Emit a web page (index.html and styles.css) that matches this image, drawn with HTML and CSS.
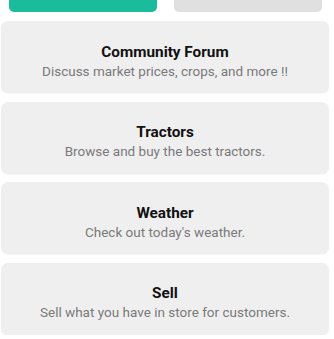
FILE: index.html
```html
<!DOCTYPE html>
<html lang="en">
<head>
<meta charset="utf-8">
<title>Home</title>
<link rel="stylesheet" href="styles.css">
</head>
<body>
<main class="page">
  <div class="actions">
    <button class="btn btn-primary">Buy</button>
    <button class="btn btn-secondary">Rent</button>
  </div>
  <section class="cards">
    <a class="card" href="#">
      <span class="card-title">Community Forum</span>
      <span class="card-sub">Discuss market prices, crops, and more !!</span>
    </a>
    <a class="card" href="#">
      <span class="card-title">Tractors</span>
      <span class="card-sub">Browse and buy the best tractors.</span>
    </a>
    <a class="card" href="#">
      <span class="card-title">Weather</span>
      <span class="card-sub">Check out today's weather.</span>
    </a>
    <a class="card" href="#">
      <span class="card-title">Sell</span>
      <span class="card-sub">Sell what you have in store for customers.</span>
    </a>
  </section>
</main>
</body>
</html>
```

FILE: styles.css
```css
* { box-sizing: border-box; }
html, body { margin: 0; padding: 0; background: #ffffff; }
body { font-family: Roboto, "Noto Sans", Arial, sans-serif; overflow: hidden; }

.page {
  width: 328px;
  margin-left: 1px;
  display: flex;
  flex-direction: column;
  gap: 9px;
}

.actions {
  display: flex;
  gap: 17px;
  padding: 0 7px 0 8px;
  margin-top: -28px;
}

.btn {
  flex: 1;
  height: 40px;
  border: none;
  border-radius: 5px;
  font-family: inherit;
  font-size: 14px;
  font-weight: 500;
  padding: 0;
  line-height: 36px;
}
.btn-primary { background: #1bbc9b; color: #ffffff; }
.btn-secondary { background: #e0e0e0; color: #f4f4f4; }

.cards {
  display: flex;
  flex-direction: column;
  gap: 8.5px;
}

.card {
  height: 72px;
  background: #efefef;
  border-radius: 7px;
  box-shadow: 0 1px 1px rgba(0,0,0,0.04);
  display: flex;
  flex-direction: column;
  align-items: center;
  justify-content: center;
  text-decoration: none;
  padding-top: 9px;
}

.card-title {
  font-size: 15.3px;
  font-weight: 700;
  color: #111111;
  line-height: 19px;
}

.card-sub {
  font-size: 13.5px;
  color: #7a7a7a;
  line-height: 19px;
}
```
